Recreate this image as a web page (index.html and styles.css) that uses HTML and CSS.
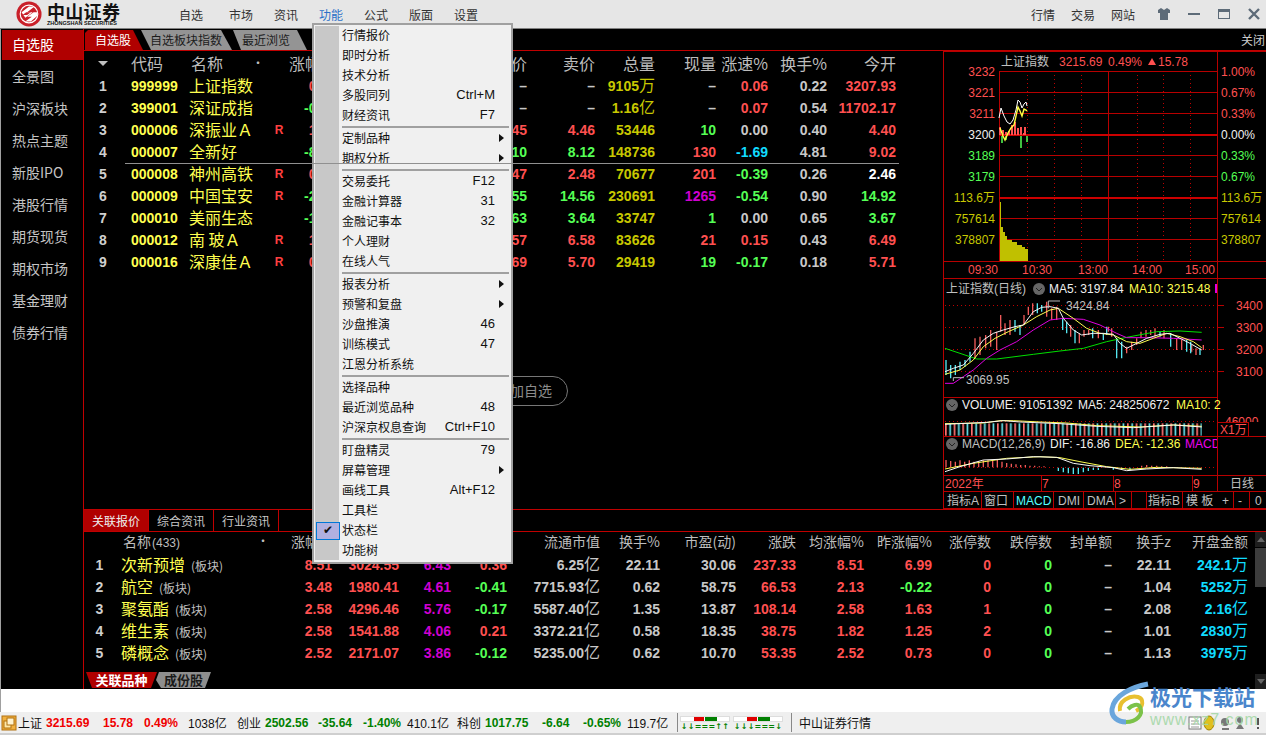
FILE: index.html
```html
<!DOCTYPE html>
<html lang="zh-CN">
<head>
<meta charset="utf-8">
<title>中山证券</title>
<link rel="stylesheet" href="styles.css">
</head>
<body>
<div class="app">
  <header class="titlebar">
    <div class="logo">
      <svg class="logo-mark" width="26" height="26" viewBox="0 0 28 28"><circle cx="14" cy="14" r="13.5" fill="#c9202a"/><circle cx="14" cy="14" r="9.5" fill="none" stroke="#fff" stroke-width="1.2"/><path d="M6 12 L14 6 L20 6 L12 12 L18 12 L10 18 Z" fill="#fff"/><path d="M10 22 L17 17 L12 17 L19 12 L23 12 L23 16 L16 22 Z" fill="#fff"/><path d="M11 12h5l-4 3h-5z" fill="#c9202a"/></svg>
      <div class="logo-text"><div class="logo-cn">中山证券</div><div class="logo-en">ZHONGSHAN SECURITIES</div></div>
    </div>
    <nav class="nav">
      <span class="nav-first">自选</span><span>市场</span><span>资讯</span><span class="nav-on">功能</span><span>公式</span><span>版面</span><span>设置</span>
    </nav>
    <nav class="nav-right"><span>行情</span><span>交易</span><span>网站</span></nav>
    <div class="winctl">
      <svg width="14" height="14" viewBox="0 0 14 14"><path d="M4 1 L1 3 L1 6 L3 6 L3 13 L11 13 L11 6 L13 6 L13 3 L10 1 L7 3 Z" fill="#5d6b78"/></svg>
      <svg width="14" height="14" viewBox="0 0 14 14"><rect x="1" y="6" width="12" height="2" fill="#5d6b78"/></svg>
      <svg width="14" height="14" viewBox="0 0 14 14"><path d="M1 2h12v10H1z M2 5v6h10V5z" fill="#5d6b78" fill-rule="evenodd"/></svg>
      <svg width="14" height="14" viewBox="0 0 14 14"><path d="M2 2 L12 12 M12 2 L2 12" stroke="#5d6b78" stroke-width="2.4"/></svg>
    </div>
  </header>

  <div class="main">
    <aside class="sidebar">
      <div class="sb-item sb-on">自选股</div>
      <div class="sb-item">全景图</div>
      <div class="sb-item">沪深板块</div>
      <div class="sb-item">热点主题</div>
      <div class="sb-item">新股IPO</div>
      <div class="sb-item">港股行情</div>
      <div class="sb-item">期货现货</div>
      <div class="sb-item">期权市场</div>
      <div class="sb-item">基金理财</div>
      <div class="sb-item">债券行情</div>
    </aside>

    <div class="content">
      <div class="tabs">
        <div class="tab tab-1">自选股</div>
        <div class="tab tab-2">自选板块指数</div>
        <div class="tab tab-3">最近浏览</div>
        <div class="tab-close">关闭</div>
      </div>

      <div class="upper">
        <section class="quotes">
          <div class="q-row q-head">
            <div class="c"><span class="sort"></span></div><div class="pl">代码</div><div class="name-h"><span>名称</span><span class="dot">•</span></div><div></div><div class="chg-h">涨幅%</div><div class="r">买价</div><div class="r">卖价</div><div class="r">总量</div><div class="r">现量</div><div class="r">涨速%</div><div class="r">换手%</div><div class="r">今开</div>
          </div>
          <div class="q-row"><div class="c n">1</div><div class="pl code">999999</div><div class="nm">上证指数</div><div></div><div class="r red">0.49</div><div class="r gry">–</div><div class="r gry">–</div><div class="r ylw">9105<i class="u">万</i></div><div class="r gry">–</div><div class="r red">0.06</div><div class="r gry">0.22</div><div class="r red">3207.93</div></div>
          <div class="q-row"><div class="c n">2</div><div class="pl code">399001</div><div class="nm">深证成指</div><div></div><div class="r grn">-0.10</div><div class="r gry">–</div><div class="r gry">–</div><div class="r ylw">1.16<i class="u">亿</i></div><div class="r gry">–</div><div class="r red">0.07</div><div class="r gry">0.54</div><div class="r red">11702.17</div></div>
          <div class="q-row"><div class="c n">3</div><div class="pl code">000006</div><div class="nm">深振业Ａ</div><div class="rz">R</div><div class="r red">1.16</div><div class="r red">4.45</div><div class="r red">4.46</div><div class="r ylw">53446</div><div class="r grn">10</div><div class="r gry">0.00</div><div class="r gry">0.40</div><div class="r red">4.40</div></div>
          <div class="q-row"><div class="c n">4</div><div class="pl code">000007</div><div class="nm">全新好</div><div></div><div class="r grn">-8.91</div><div class="r grn">8.10</div><div class="r grn">8.12</div><div class="r ylw">148736</div><div class="r red">130</div><div class="r cyn">-1.69</div><div class="r gry">4.81</div><div class="r red">9.02</div></div>
          <div class="q-sep"></div>
          <div class="q-row"><div class="c n">5</div><div class="pl code">000008</div><div class="nm">神州高铁</div><div class="rz">R</div><div class="r red">0.81</div><div class="r red">2.47</div><div class="r red">2.48</div><div class="r ylw">70677</div><div class="r red">201</div><div class="r grn">-0.39</div><div class="r gry">0.26</div><div class="r wht">2.46</div></div>
          <div class="q-row"><div class="c n">6</div><div class="pl code">000009</div><div class="nm">中国宝安</div><div class="rz">R</div><div class="r grn">-2.21</div><div class="r grn">14.55</div><div class="r grn">14.56</div><div class="r ylw">230691</div><div class="r mag">1265</div><div class="r grn">-0.54</div><div class="r gry">0.90</div><div class="r grn">14.92</div></div>
          <div class="q-row"><div class="c n">7</div><div class="pl code">000010</div><div class="nm">美丽生态</div><div></div><div class="r grn">-1.09</div><div class="r grn">3.63</div><div class="r grn">3.64</div><div class="r ylw">33747</div><div class="r grn">1</div><div class="r gry">0.00</div><div class="r gry">0.65</div><div class="r grn">3.67</div></div>
          <div class="q-row"><div class="c n">8</div><div class="pl code">000012</div><div class="nm">南 玻Ａ</div><div class="rz">R</div><div class="r red">1.23</div><div class="r red">6.57</div><div class="r red">6.58</div><div class="r ylw">83626</div><div class="r red">21</div><div class="r red">0.15</div><div class="r gry">0.43</div><div class="r red">6.49</div></div>
          <div class="q-row"><div class="c n">9</div><div class="pl code">000016</div><div class="nm">深康佳Ａ</div><div class="rz">R</div><div class="r red">0.35</div><div class="r red">5.69</div><div class="r red">5.70</div><div class="r ylw">29419</div><div class="r grn">19</div><div class="r grn">-0.17</div><div class="r gry">0.18</div><div class="r red">5.71</div></div>
          <div class="pill">添加自选</div>
        </section>

        <aside class="side">
          <svg class="chart-a" width="323" height="228" viewBox="943 51 323 228">
            <g class="ln">
              <path d="M943.5 51V279 M1217.5 51V279 M943 51.5H1266 M943 261.5H1266 M943 278.5H1266"/>
              <path d="M999.5 71V261 M1108.5 71V261 M999 71.5H1217 M999 92.5H1217 M999 113.5H1217 M999 155.5H1217 M999 176.5H1217 M999 218.5H1217 M999 239.5H1217"/>
              <path class="thick" d="M999 135H1217 M999 198H1217"/>
            </g>
            <path class="dots" d="M1027.5 71V261 M1054.5 71V261 M1081.5 71V261 M1137.5 71V261 M1163.5 71V261 M1190.5 71V261"/>
            <path d="M1000 135V127 M1003 135V130 M1006 135V132 M1009 135V131 M1012 135V125 M1015 135V122 M1018 135V128 M1021 135V127 M1024 135V133 M1025 135V127" stroke="#ff5050" stroke-width="2" fill="none"/>
            <path d="M1002 136V143 M1006 136V140 M1021 136V148 M1027 136V142" stroke="#55ff55" stroke-width="1.5" fill="none"/>
            <polyline class="l-w" points="999,118 1001,108 1004,116 1007,122 1010,124 1013,120 1016,110 1018,100 1020,102 1022,108 1024,104 1026,102 1027,106"/>
            <polyline class="l-y" points="1000,128 1003,136 1005,140 1008,133 1011,128 1014,125 1016,116 1018,107 1020,111 1022,116 1024,109 1026,110 1027,111"/>
            <polygon points="1000,261 1000,202 1001,202 1001,227 1003,227 1003,232 1005,232 1005,236 1007,236 1007,240 1012,240 1012,242 1017,242 1017,245 1022,245 1022,247 1025,247 1025,249 1028,249 1028,261" fill="#c0c000"/>
            <g class="t">
              <text x="1001" y="66" class="f-g">上证指数</text><text x="1059" y="66" class="f-r">3215.69</text><text x="1108" y="66" class="f-r">0.49%</text><path d="M1148 65 L1152 58 L1156 65Z" fill="#ff5050"/><text x="1158" y="66" class="f-r">15.78</text>
              <g text-anchor="end">
                <text x="995" y="76" class="f-r">3232</text><text x="995" y="97" class="f-r">3221</text><text x="995" y="118" class="f-r">3211</text><text x="995" y="139" class="f-w">3200</text><text x="995" y="160" class="f-n">3189</text><text x="995" y="181" class="f-n">3179</text><text x="995" y="202" class="f-y">113.6万</text><text x="995" y="223" class="f-y">757614</text><text x="995" y="244" class="f-y">378807</text>
              </g>
              <text x="1221" y="76" class="f-r">1.00%</text><text x="1221" y="97" class="f-r">0.67%</text><text x="1221" y="118" class="f-r">0.33%</text><text x="1221" y="139" class="f-w">0.00%</text><text x="1221" y="160" class="f-n">0.33%</text><text x="1221" y="181" class="f-n">0.67%</text><text x="1221" y="202" class="f-y">113.6万</text><text x="1221" y="223" class="f-y">757614</text><text x="1221" y="244" class="f-y">378807</text>
              <text x="968" y="274" class="f-r">09:30</text><text x="1022" y="274" class="f-r">10:30</text><text x="1078" y="274" class="f-r">13:00</text><text x="1132" y="274" class="f-r">14:00</text><text x="1185" y="274" class="f-r">15:00</text>
            </g>
          </svg>
          <svg class="chart-b" width="323" height="230" viewBox="943 279 323 230">
            <defs>
              <pattern id="volbars" x="15" y="0" width="52" height="10" patternUnits="userSpaceOnUse"><rect x="0" width="5" height="10" fill="#ff7070"/><rect x="13" width="5" height="10" fill="#66e6f0"/><rect x="26" width="5" height="10" fill="#ff7070"/><rect x="39" width="5" height="10" fill="#66e6f0"/></pattern>
            </defs>
            <g class="ln">
              <path d="M943.5 279V509 M1217.5 279V491 M943 397.5H1217 M943 436.5H1266 M943 475.5H1266 M943 491.5H1266 M943 508.5H1266 M1248.5 422V436 M1218 422.5H1248"/>
              <path d="M1041.5 475V491 M1113.5 475V491 M1192.5 475V491 M981.5 491V509 M1013.5 491V509 M1053.5 491V509 M1083.5 491V509 M1115.5 491V509 M1131.5 491V509 M1146.5 491V509 M1182.5 491V509 M1233.5 491V509 M1249.5 491V509"/>
            </g>
            <path class="dots" d="M945 305.5H1217 M945 327.5H1217 M945 349.5H1217 M945 371.5H1217 M945 421.5H1217 M945 467.5H1217"/>
            <g class="ln"><path d="M1217 305.5H1224 M1217 327.5H1224 M1217 349.5H1224 M1217 371.5H1224"/></g>
            <g transform="translate(940 275) scale(.33333)">
              <path class="cd-r" d="M105 190V250 M120 185V240 M137 180V220 M152 165V215 M170 170V225 M182 120V170 M195 145V180 M210 135V180 M252 120V150 M265 95V120 M278 85V120 M320 80V125 M335 100V135 M350 95V135 M392 150V185 M418 175V205 M432 165V185 M446 165V180 M475 165V190 M505 155V170 M515 160V185 M560 215V235 M575 200V225 M590 190V210 M603 170V190 M618 165V185 M632 165V180 M645 160V185 M672 165V190 M710 190V225 M725 195V225 M755 210V230 M768 220V240 M790 210V225"/>
              <path class="cd-c" d="M18 255V300 M32 270V310 M46 270V300 M60 260V285 M75 255V275 M90 230V260 M225 135V170 M240 150V180 M292 85V115 M305 90V110 M368 130V165 M380 140V175 M405 165V205 M458 160V190 M490 175V195 M500 155V180 M530 190V250 M545 200V250 M660 170V185 M692 175V215 M740 195V230 M752 200V235 M780 220V240"/>
              <polyline class="z-g" points="15,220 60,235 110,252 170,252 280,238 360,228 430,220 500,200 560,187 650,170 720,168 785,172"/>
              <polyline class="z-m" points="15,325 40,325 70,305 100,285 140,250 180,225 230,200 280,165 330,135 370,130 430,133 480,150 530,175 560,188 620,188 700,190 785,195"/>
              <polyline class="z-y" points="15,298 60,285 100,255 130,215 165,190 205,170 250,150 290,125 330,105 355,100 400,130 440,160 480,175 520,180 560,200 600,205 640,190 680,175 720,185 760,200 785,218"/>
              <polyline class="z-w" points="15,290 40,280 70,270 100,235 130,195 160,175 190,165 225,155 250,150 280,110 305,97 330,95 355,100 370,130 400,165 425,180 460,175 490,175 520,178 540,205 560,220 590,205 620,190 660,178 690,175 720,190 750,205 785,225"/>
              <path class="z-w thin" d="M325 100V78H360 M40 318V308H72"/>
              <rect x="15" y="445" width="770" height="37" fill="url(#volbars)"/>
              <polyline class="z-y" points="15,446 130,444 180,437 220,437 300,441 380,444 470,452 600,456 700,450 785,454"/>
              <polyline class="z-w" points="15,448 140,442 190,437 240,441 360,446 470,454 580,458 700,450 785,456"/>
              <path class="cd-r" d="M18 555V577 M32 558V577 M46 560V577 M60 556V577 M74 560V577 M88 556V577 M102 560V577 M116 558V577 M130 556V577 M144 556V577 M158 558V577 M172 552V577 M186 560V577 M200 564V577 M214 566V577 M228 568V577 M242 570V577 M256 570V577 M270 572V577 M284 572V577 M298 574V577 M312 574V577 M605 572V577 M620 570V577 M635 572V577 M650 572V577 M665 574V577 M680 574V577"/>
              <path class="cd-c" d="M355 578V588 M370 578V592 M385 578V595 M400 578V597 M415 578V597 M430 578V592 M445 578V588 M460 578V585 M475 578V585 M520 578V584 M545 578V584 M570 578V586"/>
              <polyline class="z-y" points="15,582 100,565 200,550 300,545 360,548 420,560 500,575 570,583 650,577 785,580"/>
              <polyline class="z-w" points="15,590 60,575 130,555 200,552 280,545 350,547 400,565 450,572 520,578 560,587 620,582 700,578 785,583"/>
            </g>
            <g class="t">
              <text x="946" y="293" class="f-g">上证指数(日线)</text>
              <circle cx="1039" cy="289" r="6" fill="#666"/><path d="M1036 288l3 3 3-3" stroke="#222" fill="none"/>
              <text x="1049" y="293" class="f-w">MA5: 3197.84</text><text x="1129" y="293" class="f-yb">MA10: 3215.48</text><rect x="1215" y="284" width="2" height="9" fill="#e000e0"/>
              <text x="1066" y="310" class="f-g">3424.84</text><text x="966" y="384" class="f-g">3069.95</text>
              <text x="1236" y="310" class="f-r">3400</text><text x="1236" y="332" class="f-r">3300</text><text x="1236" y="354" class="f-r">3200</text><text x="1236" y="376" class="f-r">3100</text>
              <circle cx="952" cy="405" r="6" fill="#666"/><path d="M949 404l3 3 3-3" stroke="#222" fill="none"/>
              <text x="962" y="409" class="f-w">VOLUME: 91051392</text><text x="1078" y="409" class="f-w">MA5: 248250672</text><text x="1176" y="409" class="f-yb">MA10: 2</text>
              <svg x="1218" y="415" width="48" height="7" viewBox="1218 415 48 7"><text x="1225" y="426" class="f-r">46000</text></svg>
              <text x="1220" y="434" class="f-r">X1万</text>
              <circle cx="952" cy="444" r="6" fill="#666"/><path d="M949 443l3 3 3-3" stroke="#222" fill="none"/>
              <text x="962" y="448" class="f-g">MACD(12,26,9)</text><text x="1050" y="448" class="f-w">DIF: -16.86</text><text x="1115" y="448" class="f-yb">DEA: -12.36</text>
              <svg x="1185" y="436" width="32" height="16" viewBox="1185 436 32 16"><text x="1185" y="448" class="f-m">MACD</text></svg>
              <text x="945" y="488" class="f-r">2022年</text><text x="1042" y="488" class="f-r">7</text><text x="1114" y="488" class="f-r">8</text><text x="1193" y="488" class="f-r">9</text><text x="1230" y="488" class="f-g">日线</text>
              <text x="947" y="505" class="f-g">指标A</text><text x="984" y="505" class="f-g">窗口</text><text x="1016" y="505" class="f-c">MACD</text><text x="1058" y="505" class="f-g">DMI</text><text x="1087" y="505" class="f-g">DMA</text><text x="1119" y="505" class="f-g">&gt;</text><text x="1148" y="505" class="f-g">指标B</text><text x="1186" y="505" class="f-g">模 板</text><text x="1222" y="505" class="f-g">+</text><text x="1238" y="505" class="f-g">-</text><text x="1255" y="505" class="f-g">0</text>
            </g>
          </svg>
        </aside>
      </div>

      <section class="lower">
        <div class="b-tabs">
          <div class="b-tab b-on">关联报价</div><div class="b-tab">综合资讯</div><div class="b-tab">行业资讯</div>
        </div>
        <div class="b-body">
          <div class="b-table">
            <div class="b-row b-head"><div></div><div class="name-b"><span>名称<small>(433)</small></span><span class="dot">•</span></div><div class="r">涨幅%</div><div class="r">现价</div><div class="r">量比</div><div class="r">涨速</div><div class="r">流通市值</div><div class="r">换手%</div><div class="r">市盈(动)</div><div class="r">涨跌</div><div class="r">均涨幅%</div><div class="r">昨涨幅%</div><div class="r">涨停数</div><div class="r">跌停数</div><div class="r">封单额</div><div class="r">换手z</div><div class="r">开盘金额</div></div>
            <div class="b-row"><div class="c n">1</div><div class="nm">次新预增<small>(板块)</small></div><div class="r red">8.51</div><div class="r red">3024.55</div><div class="r mag">6.43</div><div class="r red">0.36</div><div class="r gry">6.25<i class="u">亿</i></div><div class="r gry">22.11</div><div class="r gry">30.06</div><div class="r red">237.33</div><div class="r red">8.51</div><div class="r red">6.99</div><div class="r red">0</div><div class="r grn">0</div><div class="r gry">–</div><div class="r gry">22.11</div><div class="r cyn">242.1<i class="u">万</i></div></div>
            <div class="b-row"><div class="c n">2</div><div class="nm">航空<small>(板块)</small></div><div class="r red">3.48</div><div class="r red">1980.41</div><div class="r mag">4.61</div><div class="r grn">-0.41</div><div class="r gry">7715.93<i class="u">亿</i></div><div class="r gry">0.62</div><div class="r gry">58.75</div><div class="r red">66.53</div><div class="r red">2.13</div><div class="r grn">-0.22</div><div class="r red">0</div><div class="r grn">0</div><div class="r gry">–</div><div class="r gry">1.04</div><div class="r cyn">5252<i class="u">万</i></div></div>
            <div class="b-row"><div class="c n">3</div><div class="nm">聚氨酯<small>(板块)</small></div><div class="r red">2.58</div><div class="r red">4296.46</div><div class="r mag">5.76</div><div class="r grn">-0.17</div><div class="r gry">5587.40<i class="u">亿</i></div><div class="r gry">1.35</div><div class="r gry">13.87</div><div class="r red">108.14</div><div class="r red">2.58</div><div class="r red">1.63</div><div class="r red">1</div><div class="r grn">0</div><div class="r gry">–</div><div class="r gry">2.08</div><div class="r cyn">2.16<i class="u">亿</i></div></div>
            <div class="b-row"><div class="c n">4</div><div class="nm">维生素<small>(板块)</small></div><div class="r red">2.58</div><div class="r red">1541.88</div><div class="r mag">4.06</div><div class="r red">0.21</div><div class="r gry">3372.21<i class="u">亿</i></div><div class="r gry">0.58</div><div class="r gry">18.35</div><div class="r red">38.75</div><div class="r red">1.82</div><div class="r red">1.25</div><div class="r red">2</div><div class="r grn">0</div><div class="r gry">–</div><div class="r gry">1.01</div><div class="r cyn">2830<i class="u">万</i></div></div>
            <div class="b-row"><div class="c n">5</div><div class="nm">磷概念<small>(板块)</small></div><div class="r red">2.52</div><div class="r red">2171.07</div><div class="r mag">3.86</div><div class="r grn">-0.12</div><div class="r gry">5235.00<i class="u">亿</i></div><div class="r gry">0.62</div><div class="r gry">10.70</div><div class="r red">53.35</div><div class="r red">2.52</div><div class="r red">0.73</div><div class="r red">0</div><div class="r grn">0</div><div class="r gry">–</div><div class="r gry">1.13</div><div class="r cyn">3975<i class="u">万</i></div></div>
            <div class="sub-tabs"><div class="sub sub-on">关联品种</div><div class="sub">成份股</div></div>
          </div>
          <div class="scroll">
            <div class="sc-btn"><span class="up"></span></div>
            <div class="sc-thumb"></div>
            <div class="sc-track"></div>
            <div class="sc-btn"><span class="down"></span></div>
          </div>
        </div>
      </section>
    </div>
  </div>

  <div class="strip"></div>

  <footer class="status">
    <svg class="st-icon" width="16" height="16" viewBox="0 0 16 16"><rect x="1" y="1" width="14" height="14" fill="#f0b040" stroke="#b07010"/><rect x="3" y="6" width="7" height="7" fill="#ffe9a8" stroke="#b07010"/><rect x="6" y="3" width="7" height="7" fill="#fff3cf" stroke="#b07010"/></svg>
    <span>上证</span><b class="s-r">3215.69</b><b class="s-r">15.78</b><b class="s-r">0.49%</b><span>1038亿</span>
    <span>创业</span><b class="s-g">2502.56</b><b class="s-g">-35.64</b><b class="s-g">-1.40%</b><span>410.1亿</span>
    <span>科创</span><b class="s-g">1017.75</b><b class="s-g">-6.64</b><b class="s-g">-0.65%</b><span>119.7亿</span>
    <div class="ud">
      <div class="ud-cell"><div class="ud-bar"><i class="bar-r"></i><i class="bar-g"></i></div><div class="ud-ar">↓↓===↑↑</div></div>
      <div class="ud-cell"><div class="ud-bar"><i class="bar-r"></i><i class="bar-g"></i></div><div class="ud-ar">↓↓↓===↓</div></div>
    </div>
    <span class="st-name">中山证券行情</span>
    <div class="st-icons">
      <svg width="78" height="16" viewBox="0 0 78 16"><rect x="1" y="2" width="12" height="12" fill="#fff" stroke="#777"/><path d="M3 6h8M3 9h8M3 12h8" stroke="#999"/><ellipse cx="21" cy="8" rx="5" ry="7" fill="#e0c020" stroke="#a08000"/><circle cx="37" cy="7" r="4" fill="#777"/><path d="M34 14h7" stroke="#777" stroke-width="2"/><circle cx="52" cy="5" r="3" fill="#777"/><path d="M48 14l4-6 4 6z" fill="#777"/><path d="M70 3v7M70 12v2" stroke="#555" stroke-width="2"/></svg>
    </div>
  </footer>
  <div class="foot"></div>

  <div class="menu">
    <div class="m-rail"></div>
    <div class="m-list">
      <div class="mi">行情报价</div>
      <div class="mi">即时分析</div>
      <div class="mi">技术分析</div>
      <div class="mi">多股同列<span>Ctrl+M</span></div>
      <div class="mi">财经资讯<span>F7</span></div>
      <div class="ms"></div>
      <div class="mi more">定制品种</div>
      <div class="mi more">期权分析</div>
      <div class="ms"></div>
      <div class="mi">交易委托<span>F12</span></div>
      <div class="mi">金融计算器<span>31</span></div>
      <div class="mi">金融记事本<span>32</span></div>
      <div class="mi">个人理财</div>
      <div class="mi">在线人气</div>
      <div class="ms"></div>
      <div class="mi more">报表分析</div>
      <div class="mi more">预警和复盘</div>
      <div class="mi">沙盘推演<span>46</span></div>
      <div class="mi">训练模式<span>47</span></div>
      <div class="mi">江恩分析系统</div>
      <div class="ms"></div>
      <div class="mi">选择品种</div>
      <div class="mi">最近浏览品种<span>48</span></div>
      <div class="mi">沪深京权息查询<span>Ctrl+F10</span></div>
      <div class="ms"></div>
      <div class="mi">盯盘精灵<span>79</span></div>
      <div class="mi more">屏幕管理</div>
      <div class="mi">画线工具<span>Alt+F12</span></div>
      <div class="mi">工具栏</div>
      <div class="mi checked">状态栏</div>
      <div class="mi">功能树</div>
    </div>
  </div>

  <div class="wm">
    <svg class="wm-logo" width="44" height="44" viewBox="0 0 44 44"><path d="M40 3 C24 6 6 14 4 28 C3 36 10 41 18 41" fill="none" stroke="#6aa6dc" stroke-width="5"/><path d="M12 30 C10 20 22 14 30 16 C36 18 36 26 28 30" fill="none" stroke="#e8c030" stroke-width="4"/><path d="M18 41 C28 41 36 34 32 26 C30 22 24 24 20 28" fill="none" stroke="#7cc24a" stroke-width="4"/></svg>
    <div class="wm-cn">极光下载站</div>
    <div class="wm-en">www.xz7.com</div>
  </div>
</div>
</body>
</html>
```
FILE: styles.css
```css
* { box-sizing: border-box; }
html, body { margin: 0; padding: 0; }
body { width: 1266px; height: 735px; overflow: hidden; background: #000; font-family: "Liberation Sans", "Noto Sans CJK SC", sans-serif; }
.app { position: relative; width: 1266px; height: 735px; display: flex; flex-direction: column; overflow: hidden; }

/* title bar */
.titlebar { height: 29px; flex: none; display: flex; align-items: center; background: #e6e6e6; border-bottom: 1px solid #808080; color: #333; font-size: 12px; font-family: "Noto Sans CJK SC", sans-serif; }
.logo { width: 179px; flex: none; display: flex; align-items: center; padding-left: 16px; gap: 5px; }
.logo-text { width: 74px; }
.logo-cn { font-size: 18px; font-weight: 700; color: #111; height: 17px; line-height: 17px; letter-spacing: .3px; white-space: nowrap; }
.logo-en { font-family: "Liberation Sans", sans-serif; font-size: 5.5px; font-weight: 700; color: #111; height: 6px; line-height: 6px; white-space: nowrap; }
.nav { display: flex; gap: 21px; }
.nav span { width: 24px; white-space: nowrap; }
.nav .nav-first { margin-right: 5px; }
.nav .nav-on { color: #2a70c8; }
.nav-right { display: flex; gap: 16px; margin-left: 553px; }
.nav-right span { width: 24px; white-space: nowrap; }
.winctl { display: flex; gap: 16px; margin-left: 22px; }

/* main */
.main { height: 660px; flex: none; display: flex; background: #000; border-left: 1px solid #a0a0a0; }
.sidebar { width: 83px; flex: none; border-right: 1px solid #c00000; padding-top: 1px; padding-left: 1px; font-family: "Noto Sans CJK SC", sans-serif; }
.sb-item { height: 32px; line-height: 29px; padding-left: 10px; font-size: 14px; color: #c4c4c4; white-space: nowrap; }
.sb-on { height: 30px; line-height: 28px; margin-bottom: 2px; background: #b00000; color: #fff; }

.content { flex: 1; min-width: 0; display: flex; flex-direction: column; }
.tabs { height: 22px; flex: none; display: flex; align-items: flex-end; border-bottom: 1px solid #c00000; padding-left: 1px; font-size: 12px; font-family: "Noto Sans CJK SC", sans-serif; }
.tab { height: 20px; line-height: 20px; white-space: nowrap; color: #1c1c1c; background: #949494; }
.tab-1 { width: 58px; padding-left: 10px; background: #b00000; color: #fff; clip-path: polygon(0 3px, 3px 0, 48px 0, 58px 100%, 0 100%); }
.tab-2 { width: 91px; margin-left: -2px; padding-left: 9px; clip-path: polygon(0 0, 80px 0, 91px 100%, 10px 100%); }
.tab-3 { width: 74px; margin-left: 1px; padding-left: 9px; clip-path: polygon(0 0, 64px 0, 74px 100%, 8px 100%); }
.tab-close { margin-left: auto; margin-right: 1px; align-self: center; color: #ccc; }

.upper { height: 458px; flex: none; display: flex; }
.quotes { position: relative; width: 859px; flex: none; overflow: hidden; }
.side { width: 323px; flex: none; }
.side svg { display: block; }

/* rows */
.q-row { display: grid; grid-template-columns: 38px 67px 81px 18px 48px 191px 68px 60px 61px 52px 59px 69px; height: 22px; line-height: 22px; font-size: 14px; font-weight: 700; white-space: nowrap; }
.q-head { height: 24px; line-height: 24px; font-size: 16px; font-weight: 400; color: #bdbdbd; font-family: "Noto Sans CJK SC", sans-serif; }
.q-head .r { font-size: 16px; }
.q-sep { height: 1px; margin: 0 0 -1px 41px; width: 774px; background: #909090; position: relative; z-index: 1; }
.sort { display: inline-block; width: 0; height: 0; margin-top: 10px; vertical-align: top; border: 5px solid transparent; border-top: 5px solid #c0c0c0; border-bottom: 0; }
.c { text-align: center; }
.r { text-align: right; }
.pl { padding-left: 9px; }
.n { color: #cfcfcf; }
.code { color: #ffff50; }
.nm { color: #ffff50; font-size: 16px; font-weight: 400; line-height: 20px; font-family: "Noto Sans CJK SC", sans-serif; }
.name-h { display: flex; justify-content: space-between; padding: 0 6px 0 2px; }
.name-b { display: flex; justify-content: space-between; padding: 0 7px 0 8px; }
.dot { font-size: 12px; color: #c0c0c0; }
.chg-h { white-space: nowrap; margin-left: 1px; }
.rz { color: #ff4040; font-size: 12px; text-align: center; }
.red { color: #ff5050; }
.grn { color: #55ff55; }
.gry { color: #c8c8c8; }
.ylw { color: #c8c800; }
.cyn { color: #10dcff; }
.mag { color: #d000d0; }
.wht { color: #fff; }
.u { font-style: normal; font-size: 16px; font-weight: 400; line-height: 16px; font-family: "Noto Sans CJK SC", sans-serif; }

.pill { position: absolute; left: 366px; top: 325px; width: 118px; height: 30px; padding-right: 15px; border: 1px solid #777; border-radius: 15px; color: #8c8c8c; font-size: 14px; line-height: 27px; text-align: right; font-family: "Noto Sans CJK SC", sans-serif; white-space: nowrap; }

/* charts */
.ln path { stroke: #b80000; fill: none; stroke-width: 1; }
.ln .thick { stroke: #cc0000; stroke-width: 2; }
.dots { stroke: #c00000; stroke-dasharray: 1 3; stroke-width: 1; fill: none; }
.l-w { stroke: #fff; fill: none; stroke-width: 1; }
.l-y { stroke: #ffff40; fill: none; stroke-width: 1.4; }
.t { font-size: 12px; font-family: "Liberation Sans", "Noto Sans CJK SC", sans-serif; }
.f-r { fill: #ff5050; }
.f-w { fill: #f0f0f0; }
.f-n { fill: #55ff55; }
.f-y { fill: #c8c800; }
.f-yb { fill: #ffff50; }
.f-g { fill: #c0c0c0; }
.f-m { fill: #f000f0; }
.f-c { fill: #55ffff; }
.cd-r { stroke: #f05a5a; stroke-width: 4; fill: none; }
.cd-c { stroke: #55e6f0; stroke-width: 4; fill: none; }
.z-g { stroke: #00e000; stroke-width: 3; fill: none; }
.z-m { stroke: #e000e0; stroke-width: 3; fill: none; }
.z-y { stroke: #ffff50; stroke-width: 3; fill: none; }
.z-w { stroke: #f8f8f8; stroke-width: 3; fill: none; }
.thin { stroke: #bbb; }

/* lower */
.lower { flex: 1; min-height: 0; display: flex; flex-direction: column; border-top: 1px solid #c00000; }
.b-tabs { height: 22px; flex: none; display: flex; border-bottom: 1px solid #c00000; font-size: 12px; font-family: "Noto Sans CJK SC", sans-serif; }
.b-tab { width: 65px; border-right: 1px solid #c00000; line-height: 21px; text-align: center; color: #c8c8c8; }
.b-on { width: 65px; background: #b00000; color: #eee; }
.b-body { flex: 1; min-height: 0; display: flex; }
.b-table { flex: 1; min-width: 0; display: flex; flex-direction: column; }
.b-row { display: grid; grid-template-columns: 31px 161px 56px 67px 52px 56px 93px 60px 76px 60px 68px 68px 59px 61px 60px 59px 77px; height: 22px; line-height: 22px; font-size: 14px; font-weight: 700; white-space: nowrap; }
.b-head { height: 22px; line-height: 18px; font-weight: 400; color: #bdbdbd; font-family: "Noto Sans CJK SC", sans-serif; }
.b-row .nm { padding-left: 6px; }
.nm small { font-size: 12px; color: #c0c0c0; margin-left: 6px; }
.b-head small { font-size: 12px; margin-left: 1px; font-family: "Liberation Sans", "Noto Sans CJK SC", sans-serif; }
.sub-tabs { display: flex; margin-top: 8px; padding-left: 2px; font-size: 13px; font-weight: 700; font-family: "Noto Sans CJK SC", sans-serif; }
.sub { width: 55px; height: 16px; line-height: 16px; text-align: center; background: #8e8e8e; color: #1a1a1a; clip-path: polygon(3px 0, 100% 0, calc(100% - 6px) 100%, 5px 100%, 0 50%); margin-left: -1px; white-space: nowrap; }
.sub-on { width: 71px; margin-left: 0; background: #b00000; color: #fff; clip-path: polygon(0 0, 100% 0, calc(100% - 6px) 100%, 6px 100%); }
.scroll { width: 11px; flex: none; display: flex; flex-direction: column; background: #000; }
.sc-btn { height: 15px; display: flex; align-items: center; justify-content: center; background: #1e1e1e; }
.sc-btn .up { border: 4px solid transparent; border-bottom: 5px solid #666; border-top: 0; }
.sc-btn .down { border: 4px solid transparent; border-top: 5px solid #666; border-bottom: 0; }
.sc-thumb { height: 39px; margin-top: 1px; background: #3c3c3c; }
.sc-track { flex: 1; }

/* bottom */
.strip { height: 23px; flex: none; background: #fff; border-left: 1px solid #a0a0a0; }
.status { height: 21px; flex: none; display: grid; grid-template-columns: 18px 28px 57px 41px 44px 49px 28px 53px 45px 44px 50px 28px 57px 41px 44px 50px 115px 76px 1fr; align-items: center; background: #efefef; color: #111; font-size: 12px; white-space: nowrap; }
.status .st-icon { margin-left: 1px; }
.s-r { color: #f00000; }
.s-g { color: #008000; }
.ud { height: 19px; display: flex; gap: 3px; border-left: 1px solid #888; border-right: 1px solid #888; padding-left: 2px; }
.ud-cell { width: 50px; display: flex; flex-direction: column; }
.ud-bar { height: 6px; margin-top: 3px; display: flex; padding-left: 13px; gap: 1px; background: #fff; border: 1px solid #ddd; }
.ud-bar i { display: block; height: 100%; }
.bar-r { width: 10px; background: #e00000; }
.bar-g { width: 12px; background: #008000; }
.ud-ar { font-family: "DejaVu Sans", sans-serif; font-size: 8px; font-weight: 700; line-height: 9px; color: #008000; letter-spacing: .2px; text-align: center; }
.st-name { padding-left: 7px; font-family: "Noto Sans CJK SC", sans-serif; }
.st-icons { justify-self: end; height: 16px; }
.st-icons svg { display: block; }
.foot { height: 2px; flex: none; background: #cfcfcf; }

/* dropdown menu */
.menu { position: absolute; left: 312px; top: 23px; width: 201px; height: 541px; display: flex; background: #f0f0f0; border: 2px solid #a0a0a0; padding: 0 2px 2px 1px; font-family: "Noto Sans CJK SC", sans-serif; font-size: 12px; color: #111; }
.m-rail { position: absolute; left: 1px; top: 1px; bottom: 2px; width: 24px; background: #c8c8c8; }
.m-list { flex: 1; position: relative; padding-left: 27px; }
.mi { height: 20px; line-height: 20px; padding-right: 14px; display: flex; justify-content: space-between; white-space: nowrap; position: relative; }
.mi span { font-family: "Liberation Sans", sans-serif; font-size: 13px; }
.ms { height: 3px; margin-top: 0; background: linear-gradient(#a0a0a0, #a0a0a0) 0 1px / 100% 2px no-repeat; }
.more::after { content: ""; position: absolute; right: 5px; top: 6px; border: 4px solid transparent; border-left: 5px solid #111; border-right: 0; }
.checked::before { content: "✔"; position: absolute; left: -26px; top: 2px; width: 22px; height: 16px; line-height: 15px; text-align: center; font-size: 12px; color: #111; background: #b0b0e0; border: 1px solid #0078d7; font-family: "DejaVu Sans", sans-serif; }

/* watermark */
.wm { position: absolute; left: 1106px; top: 678px; width: 160px; height: 56px; }
.wm-logo { position: absolute; left: 2px; top: 3px; }
.wm-cn { position: absolute; left: 44px; top: 3px; font-family: "Noto Sans CJK SC", sans-serif; font-size: 21px; font-weight: 700; line-height: 30px; color: #4a86cc; white-space: nowrap; }
.wm-en { position: absolute; left: 44px; top: 33px; font-size: 16px; line-height: 18px; letter-spacing: 1px; color: #a6d8a8; white-space: nowrap; opacity: .9; }
```
